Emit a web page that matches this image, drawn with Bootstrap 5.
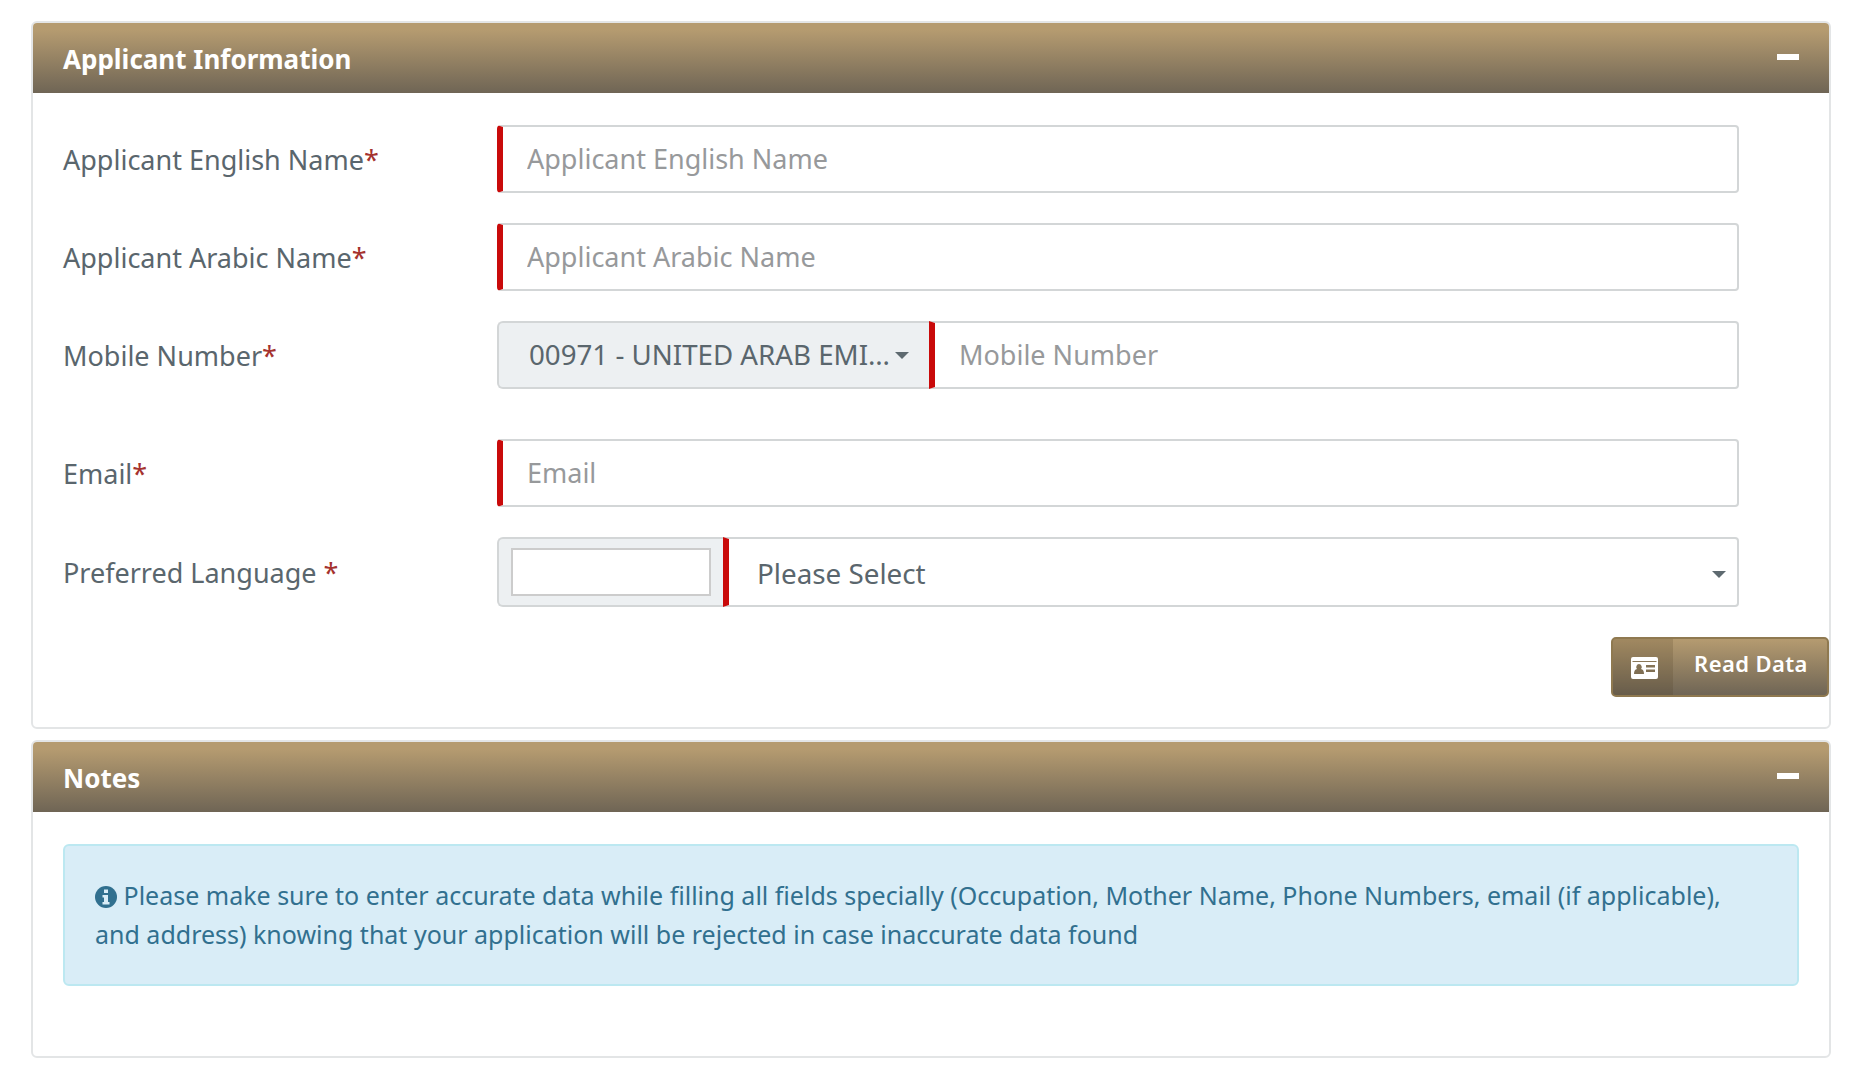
<!doctype html>
<html lang="en"><head><meta charset="utf-8"><title>Applicant</title>
<link rel="stylesheet" href="https://cdn.jsdelivr.net/npm/bootstrap@5.3.0/dist/css/bootstrap.min.css">
<style>
html,body{background:#fff;}
body{font-family:"Noto Sans","Open Sans",sans-serif;color:#5a666d;padding:21px 31px 0 31px;font-size:27px;}
.ap-panel{border:2px solid #e3e5e6;border-radius:6px;background:#fff;overflow:hidden;}
.ap-first{height:708px;margin-bottom:11px;}
.ap-second{height:318px;}
.ap-head{height:70px;margin:0 -2px;background:linear-gradient(#b59b70 10%,#6f6555 100%);color:#fff;font-weight:700;font-size:26px;padding:3px 32px 0 32px;display:flex;align-items:center;justify-content:space-between;}
.ap-dash{width:22px;height:6px;background:#fff;margin-top:-5px;}
.ap-body{padding:32px 30px 0;}
.ap-row{display:flex;align-items:center;height:68px;margin-bottom:30px;}
.ap-row.ap-gap{margin-bottom:50px;}
.ap-row.ap-tall{height:70px;}
.ap-label{width:434px;flex:none;padding-top:3px;}
.ap-req{color:#a5322e;}
.ap-group{width:1242px;height:100%;display:flex;}
.ap-input{flex:1;min-width:0;height:100%;border:2.5px solid #d3d6d7;border-left:6px solid #c90a0a;border-radius:4px;padding:0 0 2px 24px;font-size:27px;color:#5a666d;font-family:inherit;background:#fff;outline:0;}
.ap-input::placeholder{color:#97999b;opacity:1;}
.ap-addon{flex:none;background:#edf0f2;border:2.5px solid #d3d6d7;border-right:0;border-radius:6px 0 0 6px;display:flex;align-items:center;}
.ap-code{width:432px;padding:0 20px 0 30px;font-size:27.7px;}
.ap-code span{white-space:nowrap;flex:1;}
.ap-tri{width:0;height:0;border:7px solid transparent;border-top:7px solid #5e6a70;border-bottom:0;flex:none;}
.ap-lang{width:226px;padding:0 12px;}
.ap-box{width:200px;height:48px;border:2.5px solid #ccc;background:#fff;}
.ap-group .ap-input.ap-flat{border-radius:0 4px 4px 0;}
.ap-sel{flex:1;border:2.5px solid #d3d6d7;border-left:6px solid #c90a0a;border-radius:0 4px 4px 0;display:flex;align-items:center;justify-content:space-between;padding:4px 11px 0 28px;font-size:27.8px;}
.ap-read{display:flex;justify-content:flex-end;margin-right:-30px;margin-top:0;}
.ap-btn{width:218px;height:60px;padding:0;display:flex;border:2px solid #8f7950;border-radius:5px;overflow:hidden;background:linear-gradient(#b59b70,#6f6555);color:#fff;font-weight:600;font-size:22px;--bs-btn-hover-color:#fff;}
.ap-btn-ico{width:60px;height:100%;background:rgba(70,55,30,.18);display:flex;align-items:center;justify-content:center;padding-top:2px;padding-left:3px;}
.ap-btn-txt{flex:1;display:flex;align-items:center;justify-content:center;padding-bottom:8px;padding-left:2px;letter-spacing:.4px;}
.ap-alert{margin:0;padding:30px 30px;background:#d9edf7;border:2px solid #bce8f1;border-radius:6px;color:#31708f;font-size:25px;line-height:39px;height:142px;}
.ap-alert svg{vertical-align:-3px;}
</style></head>
<body>
<section class="ap-panel ap-first">
<div class="ap-head"><span>Applicant Information</span><span class="ap-dash"></span></div>
<div class="ap-body">
<div class="ap-row"><label class="ap-label">Applicant English Name<span class="ap-req">*</span></label><div class="ap-group"><input class="ap-input" placeholder="Applicant English Name"></div></div>
<div class="ap-row"><label class="ap-label">Applicant Arabic Name<span class="ap-req">*</span></label><div class="ap-group"><input class="ap-input" placeholder="Applicant Arabic Name"></div></div>
<div class="ap-row ap-gap"><label class="ap-label">Mobile Number<span class="ap-req">*</span></label><div class="ap-group"><div class="ap-addon ap-code"><span>00971 - UNITED ARAB EMI…</span><i class="ap-tri"></i></div><input class="ap-input ap-flat" placeholder="Mobile Number"></div></div>
<div class="ap-row"><label class="ap-label">Email<span class="ap-req">*</span></label><div class="ap-group"><input class="ap-input" placeholder="Email"></div></div>
<div class="ap-row ap-tall"><label class="ap-label">Preferred Language <span class="ap-req">*</span></label><div class="ap-group"><div class="ap-addon ap-lang"><div class="ap-box"></div></div><div class="ap-sel"><span>Please Select</span><i class="ap-tri"></i></div></div></div>
<div class="ap-read"><button type="button" class="btn ap-btn"><span class="ap-btn-ico"><svg width="27" height="22" viewBox="0 0 27 22"><path fill="#fff" fill-rule="evenodd" d="M2 0h23a2 2 0 0 1 2 2v18a2 2 0 0 1-2 2H2a2 2 0 0 1-2-2V2a2 2 0 0 1 2-2zM1.500 4v1h24V4zM8 7a3 3 0 0 0-2 5c-2 .5-3 2-3 5h10c0-3-1-4.500-3-5a3 3 0 0 0-2-5zm7 1v2.500h9V8zm0 4.500V15h9v-2.500z"/></svg></span><span class="ap-btn-txt">Read Data</span></button></div>
</div></section>
<section class="ap-panel ap-second">
<div class="ap-head"><span>Notes</span><span class="ap-dash"></span></div>
<div class="ap-body"><div class="ap-alert"><svg width="22" height="22" viewBox="0 0 22 22"><circle cx="11" cy="11" r="11" fill="#31708f"/><path fill="#d9edf7" d="M9 3.500h4v3.500H9zM7.500 9H13v7h1.500v2.500h-7V16H9v-4.500H7.500z"/></svg> Please make sure to enter accurate data while filling all fields specially (Occupation, Mother Name, Phone Numbers, email (if applicable), and address) knowing that your application will be rejected in case inaccurate data found</div></div>
</section>
<script src="https://cdn.jsdelivr.net/npm/bootstrap@5.3.0/dist/js/bootstrap.bundle.min.js"></script>
</body></html>
